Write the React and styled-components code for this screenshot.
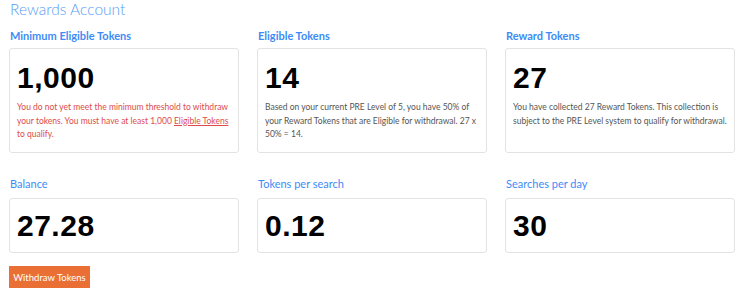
import styled, { createGlobalStyle } from "styled-components";

const GlobalStyle = createGlobalStyle`
  body {
    margin: 0;
    background: #ffffff;
    font-family: "Lato", "Open Sans", sans-serif;
  }
`;

const stats = [
  {
    label: "Minimum Eligible Tokens",
    value: "1,000",
    warn: true,
    text: (
      <>
        You do not yet meet the minimum threshold to withdraw your tokens. You
        must have at least 1,000 <a href="#">Eligible Tokens</a> to qualify.
      </>
    ),
  },
  {
    label: "Eligible Tokens",
    value: "14",
    text: "Based on your current PRE Level of 5, you have 50% of your Reward Tokens that are Eligible for withdrawal. 27 x 50% = 14.",
  },
  {
    label: "Reward Tokens",
    value: "27",
    text: "You have collected 27 Reward Tokens. This collection is subject to the PRE Level system to qualify for withdrawal.",
  },
];

const small = [
  { label: "Balance", value: "27.28" },
  { label: "Tokens per search", value: "0.12" },
  { label: "Searches per day", value: "30" },
];

const App = () => {
  return (
    <Page>
      <GlobalStyle />
      <Title>Rewards Account</Title>
      <Grid>
        {stats.map((s) => (
          <Stat key={s.label}>
            <Label>{s.label}</Label>
            <Card $tall>
              <Value>{s.value}</Value>
              <Note $warn={s.warn}>{s.text}</Note>
            </Card>
          </Stat>
        ))}
      </Grid>
      <Grid $second>
        {small.map((s) => (
          <Stat key={s.label}>
            <Label $light>{s.label}</Label>
            <Card>
              <Value>{s.value}</Value>
            </Card>
          </Stat>
        ))}
      </Grid>
      <WithdrawButton>Withdraw Tokens</WithdrawButton>
    </Page>
  );
};

export default App;

const Page = styled.div`
  padding: 0 6px 0 9px;
  width: 742px;
  height: 293px;
  box-sizing: border-box;
  overflow: hidden;
`;
const Title = styled.h1`
  margin: 0;
  padding-left: 1px;
  font-size: 15.5px;
  font-weight: 300;
  line-height: 18px;
  color: #5b9cf2;
`;
const Grid = styled.div`
  display: grid;
  grid-template-columns: repeat(3, 230px);
  column-gap: 18px;
  margin-top: ${(p) => (p.$second ? "24px" : "11px")};
`;
const Stat = styled.div`
  display: flex;
  flex-direction: column;
`;
const Label = styled.div`
  padding-left: 1px;
  font-size: 11px;
  font-weight: ${(p) => (p.$light ? 400 : 700)};
  line-height: 14px;
  color: #3e8bf5;
  margin-bottom: ${(p) => (p.$light ? "7px" : "5px")};
`;
const Card = styled.div`
  height: ${(p) => (p.$tall ? "105px" : "55px")};
  box-sizing: border-box;
  border: 1px solid #e3e3e3;
  border-radius: 3px;
  padding: ${(p) => (p.$tall ? "14px 6px 0 7px" : "12px 6px 0 7px")};
`;
const Value = styled.div`
  font-family: "Liberation Sans", Arial, sans-serif;
  font-weight: 700;
  font-size: 30px;
  line-height: 30px;
  color: #000;
  letter-spacing: 0.5px;
`;
const Note = styled.p`
  margin: 8px 0 0;
  font-size: 8.5px;
  line-height: 13.5px;
  color: ${(p) => (p.$warn ? "#dd4b4b" : "#555")};
  a {
    color: inherit;
    text-decoration: underline;
  }
`;
const WithdrawButton = styled.button`
  margin-top: 13px;
  width: 81px;
  height: 22px;
  padding: 0;
  border: none;
  background: #ea6f35;
  color: #fff;
  font-family: "Lato", sans-serif;
  font-size: 9.5px;
  cursor: pointer;
`;
